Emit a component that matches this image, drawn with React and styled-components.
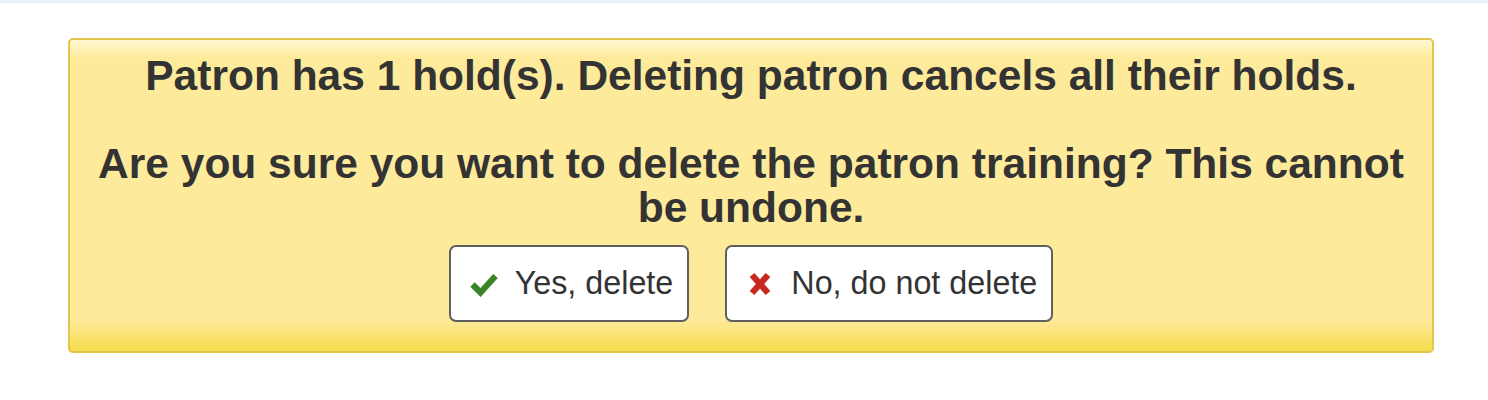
import React from 'react';
import styled, { createGlobalStyle } from 'styled-components';

const GlobalStyle = createGlobalStyle`
  body {
    margin: 0;
    background: #ffffff;
    font-family: "Liberation Sans", Arial, sans-serif;
    color: #333333;
  }
`;

const TopStrip = styled.div`
  height: 3px;
  background: #e9f0f3;
`;

const Page = styled.div`
  padding: 35px 54px 0 68px;
`;

const Dialog = styled.div`
  box-sizing: border-box;
  width: 1366px;
  height: 315px;
  border: 2px solid #e0c74b;
  border-radius: 5px;
  background: linear-gradient(
    to bottom,
    #fef7d3 0px,
    #fdea9a 18px,
    #fdea9a 280px,
    #f7df5a 305px,
    #f5dc48 313px
  );
  padding: 14px 20px 0;
  text-align: center;
`;

const Heading = styled.h3`
  margin: 0 0 44px;
  font-size: 42.5px;
  line-height: 44px;
  font-weight: bold;
  color: #333333;

  &:last-of-type {
    margin-bottom: 0;
  }
`;

const Actions = styled.div`
  display: flex;
  justify-content: center;
  gap: 36px;
  margin-top: 15px;
`;

const Button = styled.button`
  box-sizing: border-box;
  display: flex;
  align-items: center;
  gap: 17px;
  height: 77px;
  padding: 0 14px 0 19px;
  background: #ffffff;
  border: 2px solid #5f5f5f;
  border-radius: 7px;
  font-family: "Liberation Sans", Arial, sans-serif;
  font-size: 32.3px;
  color: #333333;
  cursor: pointer;
`;

const Icon = styled.svg`
  width: 28px;
  height: 24px;
  flex: none;
  overflow: visible;
`;

const CheckIcon = () => (
  <Icon viewBox="0 0 28 24">
    <polyline
      points="2.5,12.5 10.5,20.5 25.5,4"
      fill="none"
      stroke="#3a8527"
      strokeWidth="6.2"
      strokeLinejoin="miter"
    />
  </Icon>
);

const CrossIcon = () => (
  <Icon viewBox="0 0 28 24">
    <g stroke="#c9271f" strokeWidth="6.2">
      <line x1="6" y1="3" x2="22" y2="21" />
      <line x1="22" y1="3" x2="6" y2="21" />
    </g>
  </Icon>
);

export default function App() {
  return (
    <>
      <GlobalStyle />
      <TopStrip />
      <Page>
        <Dialog>
          <Heading>Patron has 1 hold(s). Deleting patron cancels all their holds.</Heading>
          <Heading>Are you sure you want to delete the patron training? This cannot be undone.</Heading>
          <Actions>
            <Button>
              <CheckIcon />
              Yes, delete
            </Button>
            <Button>
              <CrossIcon />
              No, do not delete
            </Button>
          </Actions>
        </Dialog>
      </Page>
    </>
  );
}
